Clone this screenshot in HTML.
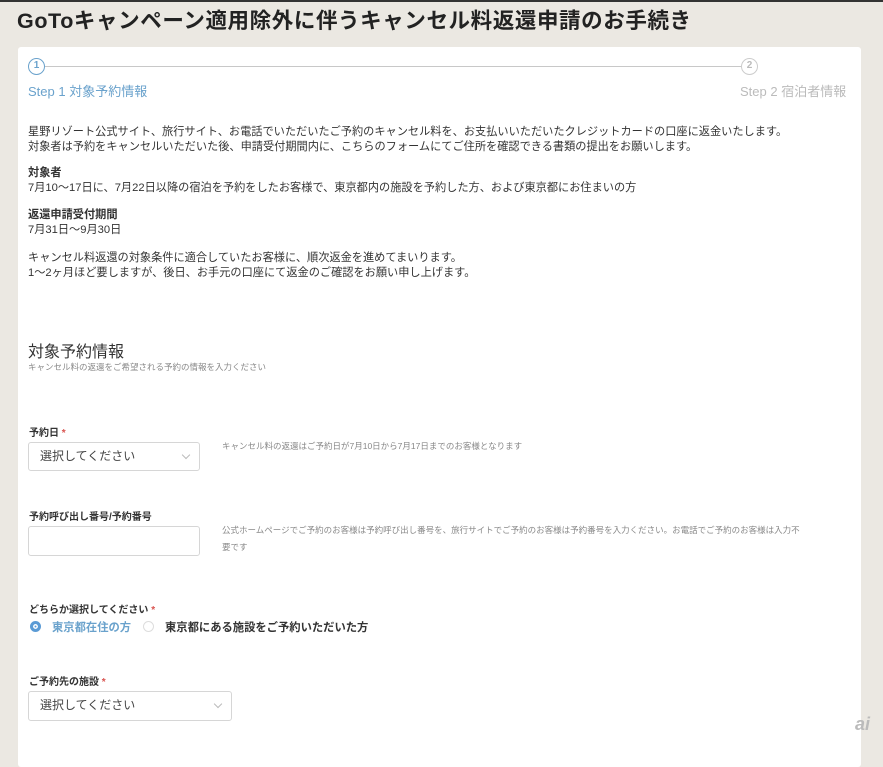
<!DOCTYPE html>
<html><head><meta charset="utf-8"><style>
*{margin:0;padding:0;box-sizing:border-box}
body{width:883px;height:747px;overflow:hidden;background:#ebe8e2;font-family:"Liberation Sans","Noto Sans CJK JP",sans-serif;color:#333;position:relative}
.a{position:absolute;white-space:nowrap}
h1{position:absolute;left:17px;top:4px;font-size:21.5px;font-weight:bold;color:#222;letter-spacing:0.6px}
.card{position:absolute;left:18px;top:47px;width:843px;height:720px;background:#fff;border-radius:3px}
.t{font-size:11.2px;line-height:15px;color:#333}
.s{font-size:8.5px;color:#888}
.box{position:absolute;border:1px solid #d6d6d6;border-radius:3px;background:#fff;font-size:12px;color:#444;padding-left:11px;line-height:27px}
.chev{position:absolute;right:10px;top:9px;width:6px;height:6px;border-right:1px solid #bbb;border-bottom:1px solid #bbb;transform:rotate(45deg)}
.req{color:#d9534f}
.lb{font-size:10px;font-weight:bold;color:#333}
</style></head><body>
<div class="a" style="left:0;top:0;width:883px;height:2px;background:#333"></div>
<h1>GoToキャンペーン適用除外に伴うキャンセル料返還申請のお手続き</h1>
<div class="card"></div>
<div class="a" style="left:28px;top:58px;width:17px;height:17px;border:1.5px solid #6aa2cc;border-radius:50%;font-size:10px;font-weight:bold;color:#6aa2cc;text-align:center;line-height:14px">1</div>
<div class="a" style="left:45px;top:66px;width:696px;height:1px;background:#c8c8c8"></div>
<div class="a" style="left:741px;top:58px;width:17px;height:17px;border:1.5px solid #ccc;border-radius:50%;font-size:10px;font-weight:bold;color:#bbb;text-align:center;line-height:14px">2</div>
<div class="a" style="left:28px;top:81px;font-size:13px;color:#6aa2cc">Step 1 対象予約情報</div>
<div class="a" style="left:740px;top:81px;font-size:13px;color:#bbb">Step 2 宿泊者情報</div>
<div class="a t" style="left:28px;top:125px">星野リゾート公式サイト、旅行サイト、お電話でいただいたご予約のキャンセル料を、お支払いいただいたクレジットカードの口座に返金いたします。<br>対象者は予約をキャンセルいただいた後、申請受付期間内に、こちらのフォームにてご住所を確認できる書類の提出をお願いします。</div>
<div class="a t" style="left:28px;top:166px"><b>対象者</b><br>7月10～17日に、7月22日以降の宿泊を予約をしたお客様で、東京都内の施設を予約した方、および東京都にお住まいの方</div>
<div class="a t" style="left:28px;top:208px"><b>返還申請受付期間</b><br>7月31日～9月30日</div>
<div class="a t" style="left:28px;top:251px">キャンセル料返還の対象条件に適合していたお客様に、順次返金を進めてまいります。<br>1～2ヶ月ほど要しますが、後日、お手元の口座にて返金のご確認をお願い申し上げます。</div>
<div class="a" style="left:28px;top:338px;font-size:16px;color:#333">対象予約情報</div>
<div class="a s" style="left:28px;top:361px">キャンセル料の返還をご希望される予約の情報を入力ください</div>
<div class="a lb" style="left:29px;top:424px">予約日 <span class="req">*</span></div>
<div class="box" style="left:28px;top:442px;width:172px;height:29px">選択してください<span class="chev"></span></div>
<div class="a s" style="left:222px;top:440px">キャンセル料の返還はご予約日が7月10日から7月17日までのお客様となります</div>
<div class="a lb" style="left:29px;top:508px">予約呼び出し番号/予約番号</div>
<div class="box" style="left:28px;top:526px;width:172px;height:30px"></div>
<div class="a s" style="left:222px;top:522px;line-height:17px">公式ホームページでご予約のお客様は予約呼び出し番号を、旅行サイトでご予約のお客様は予約番号を入力ください。お電話でご予約のお客様は入力不<br>要です</div>
<div class="a lb" style="left:29px;top:601px">どちらか選択してください <span class="req">*</span></div>
<div class="a" style="left:30px;top:621px;width:11px;height:11px;border-radius:50%;background:#5b9bd5;border:3px solid #5b9bd5;box-shadow:inset 0 0 0 1.5px #fff"></div>
<div class="a" style="left:52px;top:619px;font-size:11.3px;font-weight:bold;color:#6aa2cc">東京都在住の方</div>
<div class="a" style="left:143px;top:621px;width:11px;height:11px;border-radius:50%;border:1px solid #ddd"></div>
<div class="a" style="left:165px;top:619px;font-size:11.3px;font-weight:bold;color:#333">東京都にある施設をご予約いただいた方</div>
<div class="a lb" style="left:29px;top:673px">ご予約先の施設 <span class="req">*</span></div>
<div class="box" style="left:28px;top:691px;width:204px;height:30px">選択してください<span class="chev"></span></div>
<div class="a" style="left:855px;top:714px;font-size:18px;font-weight:bold;color:#bbb;font-style:italic">ai</div>
</body></html>
